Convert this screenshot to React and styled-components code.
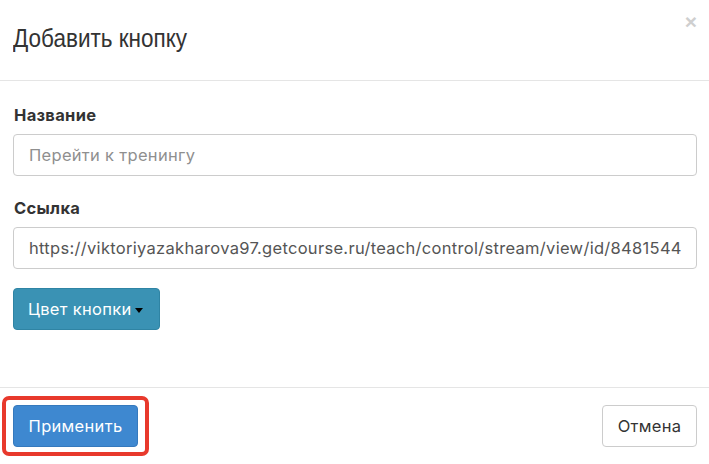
import React from "react";
import styled, { createGlobalStyle } from "styled-components";

const Global = createGlobalStyle`
  body {
    margin: 0;
    background: #fff;
    font-family: Inter, "Noto Sans", sans-serif;
    color: #333;
  }
`;

const Modal = styled.div`
  width: 709px;
  height: 464px;
  display: flex;
  flex-direction: column;
  background: #fff;
`;

const Header = styled.div`
  position: relative;
  height: 81px;
  border-bottom: 1px solid #e5e5e5;
  padding: 0 13px;
  display: flex;
  align-items: center;
  box-sizing: border-box;
`;

const Title = styled.h4`
  margin: 0;
  margin-top: -4px;
  font-family: "Liberation Sans", Arial, sans-serif;
  font-weight: 400;
  font-size: 26px;
  color: #333;
  transform: scaleX(0.866);
  transform-origin: left center;
  white-space: nowrap;
`;

const Close = styled.span`
  position: absolute;
  top: 10px;
  right: 12px;
  font-family: "Liberation Sans", Arial, sans-serif;
  font-size: 21px;
  font-weight: 700;
  color: #cfcfcf;
`;

const Body = styled.div`
  flex: 1;
  padding: 24px 12px 0 13px;
  display: flex;
  flex-direction: column;
  border-bottom: 1px solid #e5e5e5;
  font-size: 16.5px;
  letter-spacing: 0.3px;
`;

const Label = styled.label`
  font-weight: 700;
  color: #333;
  margin: 0 0 9px 1px;
  line-height: 20px;
`;

const Input = styled.div`
  height: 42px;
  box-sizing: border-box;
  border: 1px solid #ccc;
  border-radius: 4px;
  padding: 0 15px;
  display: flex;
  align-items: center;
  color: ${p => (p.$placeholder ? "#8f8f8f" : "#555")};
  margin-bottom: 22px;
  white-space: nowrap;
  overflow: hidden;
`;

const ColorButton = styled.button`
  align-self: flex-start;
  height: 42px;
  width: 147px;
  margin-top: -3px;
  border: 1px solid #2f84a4;
  border-radius: 4px;
  background: #3a92b4;
  color: #fff;
  font-family: Inter, sans-serif;
  font-size: 16.5px;
  letter-spacing: 0.3px;
  padding: 0 14px;
  display: flex;
  align-items: center;
  gap: 4px;
  white-space: nowrap;
`;

const Caret = styled.span`
  width: 0;
  height: 0;
  border-left: 4.5px solid transparent;
  border-right: 4.5px solid transparent;
  border-top: 5px solid #000;
  margin-top: 2px;
`;

const Footer = styled.div`
  height: 76px;
  padding: 0 12px 0 13px;
  display: flex;
  align-items: center;
  justify-content: space-between;
  box-sizing: border-box;
`;

const Highlight = styled.div`
  border: 4px solid #e8392c;
  border-radius: 7px;
  padding: 5px 7px;
  margin-left: -11px;
  display: flex;
`;

const Button = styled.button`
  height: 42px;
  box-sizing: border-box;
  border-radius: 4px;
  font-family: Inter, sans-serif;
  font-size: 16.5px;
  letter-spacing: 0.3px;
  padding: 0 14px;
  border: 1px solid ${p => (p.$primary ? "#3579bd" : "#ccc")};
  background: ${p => (p.$primary ? "#3e88d0" : "#fff")};
  color: ${p => (p.$primary ? "#fff" : "#333")};
  width: ${p => p.$w}px;
  white-space: nowrap;
`;

export default function App() {
  return (
    <Modal>
      <Global />
      <Header>
        <Title>Добавить кнопку</Title>
        <Close>×</Close>
      </Header>
      <Body>
        <Label>Название</Label>
        <Input $placeholder>Перейти к тренингу</Input>
        <Label>Ссылка</Label>
        <Input>https://viktoriyazakharova97.getcourse.ru/teach/control/stream/view/id/8481544</Input>
        <ColorButton>
          Цвет кнопки
          <Caret />
        </ColorButton>
      </Body>
      <Footer>
        <Highlight>
          <Button $primary $w={125}>Применить</Button>
        </Highlight>
        <Button $w={95}>Отмена</Button>
      </Footer>
    </Modal>
  );
}
